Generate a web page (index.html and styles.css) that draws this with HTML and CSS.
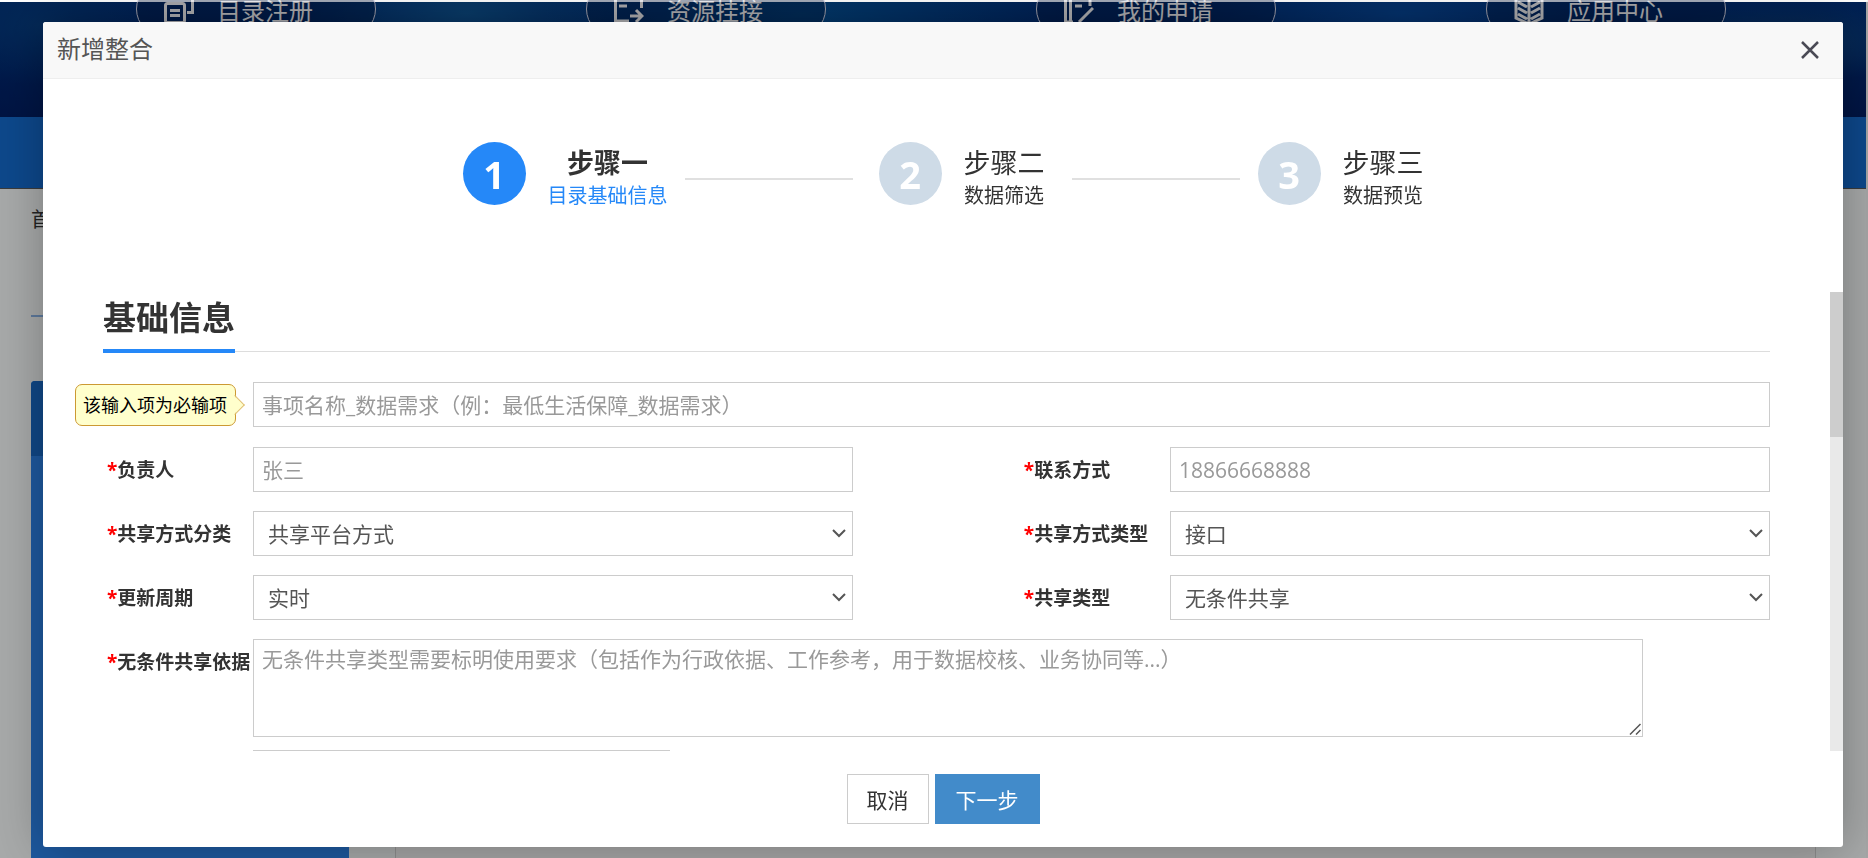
FILE: index.html
```
<!DOCTYPE html>
<html lang="zh-CN">
<head>
<meta charset="utf-8">
<title>新增整合</title>
<link rel="stylesheet" href="styles.css">
</head>
<body>
<div class="page">
  <header class="hero">
    <nav class="hero-nav">
      <a class="pill" href="#">
        <svg class="pill-icon" viewBox="0 0 30 30" fill="none" stroke="currentColor" stroke-width="3"><rect x="1.500" y="9.500" width="19" height="19" rx="2"/><path d="M6 16.500h10M6 21.500h10M23 18.500h5.500V4H9"/></svg>
        <span>目录注册</span>
      </a>
      <a class="pill" href="#">
        <svg class="pill-icon" viewBox="0 0 30 30" fill="none" stroke="currentColor" stroke-width="3"><path d="M15 27H1.500V3h26v11M5 12h8M16 22h12M22 16l6 6-6 6"/></svg>
        <span>资源挂接</span>
      </a>
      <a class="pill" href="#">
        <svg class="pill-icon" viewBox="0 0 30 30" fill="none" stroke="currentColor" stroke-width="3"><path d="M1.500 2v26M6.500 2v26M1 28h8M7 3h19v9M11 12h7M29 14L15 28"/></svg>
        <span>我的申请</span>
      </a>
      <a class="pill" href="#">
        <svg class="pill-icon" viewBox="0 0 30 30" fill="none" stroke="currentColor" stroke-width="3"><path d="M15 4v25M2 4v20l13 6 13-6V4M4 8l9 5M4 14l9 5M4 20l9 5M26 8l-9 5M26 14l-9 5M26 20l-9 5"/></svg>
        <span>应用中心</span>
      </a>
    </nav>
  </header>
  <div class="band"></div>
  <main class="content">
    <div class="crumb">首页</div>
    <hr class="rule">
    <div class="panels">
      <aside class="side"><div class="side-head"></div></aside>
      <section class="main-panel"></section>
    </div>
  </main>
</div>
<div class="shade"></div>

<div class="modal" role="dialog" aria-labelledby="modal-title">
  <header class="modal-head">
    <h1 class="modal-title" id="modal-title">新增整合</h1>
    <button class="close" type="button" aria-label="关闭">
      <svg viewBox="0 0 18 18" width="18" height="18" fill="none" stroke="currentColor" stroke-width="2.500"><path d="M1 1l16 16M17 1L1 17"/></svg>
    </button>
  </header>

  <div class="steps">
    <span class="dot dot-on">1</span>
    <div class="step step-on"><strong class="step-name">步骤一</strong><span class="step-note">目录基础信息</span></div>
    <span class="line line-first"></span>
    <span class="dot">2</span>
    <div class="step"><span class="step-name">步骤二</span><span class="step-note">数据筛选</span></div>
    <span class="line line-second"></span>
    <span class="dot">3</span>
    <div class="step"><span class="step-name">步骤三</span><span class="step-note">数据预览</span></div>
  </div>

  <div class="scroller">
    <form class="form" id="form">
      <div class="section"><h2 class="section-title">基础信息</h2></div>

      <div class="row row-name">
        <div class="tip" role="tooltip" id="tip">该输入项为必输项</div>
        <input class="field span-all" type="text" aria-label="名称" aria-describedby="tip" placeholder="事项名称_数据需求（例：最低生活保障_数据需求）">
      </div>
      <div class="row">
        <label class="label" for="owner"><i class="req">*</i>负责人</label>
        <input class="field" id="owner" type="text" placeholder="张三">
        <label class="label label-right" for="phone"><i class="req">*</i>联系方式</label>
        <input class="field" id="phone" type="text" placeholder="18866668888">
      </div>
      <div class="row">
        <label class="label" for="way"><i class="req">*</i>共享方式分类</label>
        <div class="picker">
          <select class="field select" id="way"><option>共享平台方式</option></select>
          <svg class="arrow" viewBox="0 0 14 9" fill="none" stroke="currentColor" stroke-width="2"><path d="M1 1l6 6 6-6"/></svg>
        </div>
        <label class="label label-right" for="kind"><i class="req">*</i>共享方式类型</label>
        <div class="picker">
          <select class="field select" id="kind"><option>接口</option></select>
          <svg class="arrow" viewBox="0 0 14 9" fill="none" stroke="currentColor" stroke-width="2"><path d="M1 1l6 6 6-6"/></svg>
        </div>
      </div>
      <div class="row">
        <label class="label" for="cycle"><i class="req">*</i>更新周期</label>
        <div class="picker">
          <select class="field select" id="cycle"><option>实时</option></select>
          <svg class="arrow" viewBox="0 0 14 9" fill="none" stroke="currentColor" stroke-width="2"><path d="M1 1l6 6 6-6"/></svg>
        </div>
        <label class="label label-right" for="share"><i class="req">*</i>共享类型</label>
        <div class="picker">
          <select class="field select" id="share"><option>无条件共享</option></select>
          <svg class="arrow" viewBox="0 0 14 9" fill="none" stroke="currentColor" stroke-width="2"><path d="M1 1l6 6 6-6"/></svg>
        </div>
      </div>
      <div class="row row-area">
        <label class="label" for="basis"><i class="req">*</i>无条件共享依据</label>
        <div class="span-all">
          <div class="area-box">
            <textarea class="field area" id="basis" placeholder="无条件共享类型需要标明使用要求（包括作为行政依据、工作参考，用于数据校核、业务协同等...）"></textarea>
            <svg class="grip" viewBox="0 0 12 12" fill="none" stroke="currentColor" stroke-width="1.500"><path d="M1 11.500L11.500 1M7 11.500L11.500 7"/></svg>
          </div>
          <input class="field extra" type="text" aria-label="附件">
        </div>
      </div>
    </form>
    <div class="track" aria-hidden="true"><div class="thumb"></div></div>
  </div>

  <footer class="modal-foot">
    <button class="btn" type="button">取消</button>
    <button class="btn btn-main" type="submit" form="form">下一步</button>
  </footer>
</div>
</body>
</html>
```
FILE: styles.css
```
* { box-sizing: border-box; }

body {
  margin: 0;
  height: 100vh;
  overflow: hidden;
  font-family: "Open Sans", "Noto Sans CJK SC", sans-serif;
  font-size: 21px;
  color: #333;
  background: #eff2f2;
}

/* Page behind the dialog */
.page {
  display: flex;
  flex-direction: column;
  height: 100%;
  border-top: 2px solid #fff;
  border-right: 2px solid #eee;
}

.hero {
  height: 115px;
  background:
    radial-gradient(ellipse 170px 60px at 25% 10%, #0d5494, transparent),
    radial-gradient(ellipse 260px 90px at 43% 10%, #045097, transparent),
    radial-gradient(ellipse 200px 60px at 75% 10%, #06479a, transparent),
    radial-gradient(ellipse 140px 40px at 96% 35%, #0c4480, transparent),
    radial-gradient(ellipse 120px 60px at 2% 20%, #053a7c, transparent),
    linear-gradient(#002f78, #001d60);
}

.hero-nav {
  display: grid;
  grid-template-columns: repeat(4, 1fr);
  justify-items: center;
  margin: 0 35px 0 31px;
  transform: translateY(-21px);
}

.pill {
  display: flex;
  align-items: center;
  gap: 23px;
  width: 240px;
  height: 56px;
  padding-left: 27px;
  border: 1px solid #dde;
  border-radius: 28px;
  color: #f2f2f6;
  font-size: 24px;
  text-decoration: none;
  background: rgba(0, 20, 60, .35);
}

.pill-icon { width: 30px; height: 30px; }

.band {
  height: 72px;
  background: #1367c7;
  border-bottom: 1px solid #555;
}

.content {
  flex: 1;
  display: flex;
  flex-direction: column;
  padding: 0 35px 0 31px;
}

.crumb { line-height: 62px; height: 126px; font-size: 20px; }

.rule {
  width: 100%;
  height: 2px;
  margin: 0 0 64px;
  border: 0;
  background: #86aee0;
}

.panels { flex: 1; display: flex; gap: 46px; }

.side {
  flex: 0 0 318px;
  border-radius: 4px 4px 0 0;
  overflow: hidden;
  background: #2a7fe3;
}

.side-head { height: 75px; background: #1766c0; }

.main-panel { flex: 1; margin-right: 15px; border: solid #ccc; border-width: 0 1px; background: #eee; }

.shade { position: fixed; inset: 2px 0 0; background: rgba(0, 0, 0, .3); }

/* Dialog */
.modal {
  position: fixed;
  inset: 22px 25px 11px 43px;
  display: flex;
  flex-direction: column;
  overflow: hidden;
  border-radius: 3px;
  background: #fff;
  box-shadow: 1px 1px 50px rgba(0, 0, 0, .3);
}

.modal-head {
  display: flex;
  align-items: center;
  justify-content: space-between;
  height: 57px;
  padding: 0 24px 1px 14px;
  border-bottom: 1px solid #eee;
  background: #f8f8f8;
}

.modal-title { margin: 0; font-size: 24px; line-height: 32px; padding-bottom: 2px; font-weight: 400; color: #555; }

.close {
  display: flex;
  padding: 0;
  border: 0;
  background: none;
  color: #4a4a55;
}

.steps {
  display: flex;
  align-items: center;
  justify-content: center;
  height: 213px;
  padding: 63px 0 76px;
}

.dot {
  align-self: flex-start;
  width: 63px;
  height: 63px;
  margin-right: 22px;
  border-radius: 50%;
  background: #cedbe7;
  color: #fff;
  font-size: 38px;
  font-weight: 700;
  line-height: 64px;
  text-align: center;
}

.dot-on { background: #2588f8; }

.step { display: flex; flex-direction: column; align-items: center; }
.step-name { font-size: 27px; line-height: 33px; }
.step-note { font-size: 20px; line-height: 33px; }
.step-on .step-note { color: #2588f8; }

.line { width: 168px; height: 2px; background: #e0e0e0; }
.line-first { margin: 0 26px 0 17px; }
.line-second { margin: 0 18px 0 27px; }

/* Form */
.scroller {
  flex: 1;
  min-height: 0;
  display: flex;
}

.form {
  flex: 1;
  min-width: 0;
  padding: 0 60px;
  overflow-y: auto;
  scrollbar-width: none;
}

.track { width: 13px; background: #e9e9e9; }
.thumb { height: 31.6%; background: #cdcdcd; }

.section {
  display: flex;
  margin-bottom: 30px;
  border-bottom: 1px solid #ddd;
}

.section-title {
  margin: 0 0 -2px;
  padding-bottom: 5px;
  border-bottom: 4px solid #2588f8;
  font-size: 33px;
  line-height: 52px;
}

.row {
  position: relative;
  display: grid;
  grid-template-columns: 9fr 36fr 10fr 9fr 36fr;
  align-items: center;
  margin-bottom: 19px;
}

.row-name { margin-bottom: 20px; }
.row-area { align-items: start; }
.span-all { grid-column: 2 / -1; }

.label {
  min-width: 0;
  padding-left: 4px;
  font-size: 19px;
  font-weight: 700;
  line-height: 46px;
  height: 45px;
  white-space: nowrap;
}

.label-right { grid-column: 4; }
.req { color: #f00; font-style: normal; }

.field {
  width: 100%;
  min-width: 0;
  height: 45px;
  padding: 0 8px;
  border: 1px solid #ccc;
  border-radius: 0;
  background: #fff;
  color: #555;
  font: inherit;
}

.field::placeholder { color: #999; }

.picker { position: relative; min-width: 0; }
.select { display: block; padding: 0 14px; appearance: none; }

.arrow {
  position: absolute;
  top: 18px;
  right: 7px;
  width: 14px;
  height: 9px;
  color: #555;
  pointer-events: none;
}

.area-box { position: relative; width: 91.6%; }

.area {
  display: block;
  height: 98px;
  padding: 4px 8px;
  line-height: 30px;
  resize: none;
}

.grip {
  position: absolute;
  right: 2px;
  bottom: 2px;
  width: 12px;
  height: 12px;
  color: #555;
}

.extra { display: block; width: 27.5%; margin-top: 13px; }

.tip {
  position: absolute;
  left: -28px;
  top: 2px;
  z-index: 1;
  padding: 0 8px 0 7px;
  border: 1px solid #cc9933;
  border-radius: 7px;
  background: #ffffcc;
  color: #000;
  font-size: 18px;
  line-height: 40px;
  white-space: nowrap;
}

.tip::after {
  content: "";
  position: absolute;
  top: 13px;
  right: -7px;
  width: 13px;
  height: 13px;
  border: solid #e0c070;
  border-width: 1px 1px 0 0;
  background: linear-gradient(45deg, transparent 50%, #ffffcc 50%);
  transform: rotate(45deg);
}

.modal-foot {
  display: flex;
  justify-content: center;
  gap: 6px;
  padding: 23px 0;
}

.btn {
  height: 50px;
  padding: 0 19px;
  border: 1px solid #ccc;
  background: #fff;
  color: #333;
  font: inherit;
}

.btn-main { padding: 0 20px; border-color: #428bca; background: #428bca; color: #fff; }
```
